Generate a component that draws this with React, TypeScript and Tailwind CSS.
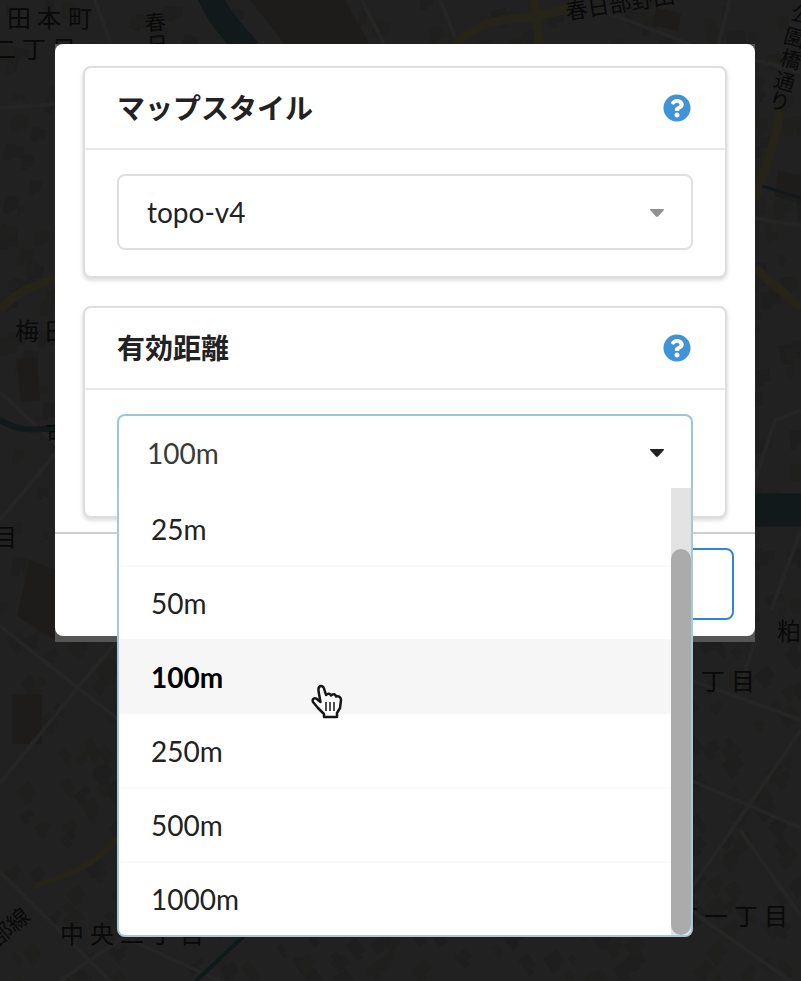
import { useState, type ReactNode } from 'react';
import { FaQuestionCircle } from 'react-icons/fa';

type Block = { points: string; fill: string };

// Building footprints for the street map, scattered with a small seeded generator.
function makeBlocks(): Block[] {
  let seed = 17;
  const next = () => {
    seed = (seed * 16807) % 2147483647;
    return seed / 2147483647;
  };
  const blocks: Block[] = [];
  for (let i = 0; i < 1100; i++) {
    const x = Math.round(next() * 801);
    const y = Math.round(next() * 981);
    const w = 6 + Math.round(next() * 14);
    const h = 5 + Math.round(next() * 10);
    const base = y > 620 ? -42 : x > 380 ? -14 : 6;
    const a = ((base + next() * 10) * Math.PI) / 180;
    const at = (u: number, v: number) =>
      `${Math.round(x + u * Math.cos(a) - v * Math.sin(a))},${Math.round(y + u * Math.sin(a) + v * Math.cos(a))}`;
    blocks.push({
      points: [at(0, 0), at(w, 0), at(w, h), at(w / 2, h), at(w / 2, h + 4), at(0, h + 4)].join(' '),
      fill: next() < 0.6 ? '#1f1f1e' : '#1e1e1e',
    });
  }
  return blocks;
}

const blocks = makeBlocks();

function StreetMap() {
  return (
    <svg
      className="absolute inset-0 h-full w-full"
      viewBox="0 0 801 981"
      preserveAspectRatio="xMidYMin slice"
      aria-hidden="true"
    >
      <rect width="801" height="981" fill="#212121" />
      {blocks.map((b, i) => (
        <polygon key={i} points={b.points} fill={b.fill} />
      ))}
      <g fill="#1d1c1a">
        <path d="M250 0H345L372 50H290Z" />
        <path d="M656 8l25 5-3 18-25-6z" />
        <path d="M16 358h21l3 42-19 2z" />
        <path d="M30 560l25 10v70l-38-24z" />
        <path d="M12 694h30v50H12z" />
        <path d="M778 170l23 6v28l-26-8z" />
      </g>
      <g fill="none" stroke="#252525" strokeWidth="4">
        <path d="M0 626l78 62 70 54M160 590l-80 95-80 98M0 872l110 109M220 870L60 981" />
        <path d="M0 392l60 56M60 448L0 520M0 108l55-4M95 0l16 44" />
        <path d="M362 0l22 44M440 0l18 44M600 10l90 34M730 0l-12 44M755 60l46 12" />
        <path d="M755 218l46 8M755 480l20-60 26-10M801 530l-30 80" />
        <path d="M690 680l111 40M690 780l111 48M801 730L690 890M740 830l61 86M690 910l100 71M130 940l90 41M755 640l-16 50" />
      </g>
      <g fill="none" stroke="#262418" strokeWidth="9">
        <path d="M0 310c16-18 34-24 56-32" />
        <path d="M455 44c20-18 40-26 72-26l44-10M534 0l6 44" />
        <path d="M780 110c-4 30-12 52-25 90M755 268l46 40" />
        <path d="M118 838c-24 28-50 38-84 48" strokeWidth="6" />
      </g>
      <g fill="none" stroke="#11191b">
        <path d="M207-10c10 26 24 40 42 60" strokeWidth="24" />
        <path d="M0 420c18 12 34 10 60 8" strokeWidth="6" />
        <path d="M750 510h56" strokeWidth="33" />
        <path d="M244 936l-48 45" strokeWidth="4" />
        <path d="M762 186l39 12" strokeWidth="3" />
      </g>
      <g
        fill="#090909"
        fontSize="24"
        style={{ fontFamily: '"Noto Sans CJK JP", sans-serif' }}
      >
        <text x="7 37 68" y="27">田本町</text>
        <text x="-8 22 52" y="58">二丁目</text>
        <text x="145" y="30" fontSize="21" transform="rotate(-5 155 25)">春</text>
        <text x="147" y="52" fontSize="21" transform="rotate(-5 155 45)">日</text>
        <text x="567" y="20" fontSize="22" transform="rotate(-9 567 20)">春日部野田</text>
        <g fontSize="21">
          <text x="791" y="22" transform="rotate(15 801 15)">公</text>
          <text x="784" y="45" transform="rotate(15 794 38)">園</text>
          <text x="780" y="67" transform="rotate(15 790 60)">橋</text>
          <text x="774" y="89" transform="rotate(15 784 82)">通</text>
          <text x="769" y="109" transform="rotate(15 779 102)">り</text>
        </g>
        <text x="15 45" y="340">梅田</text>
        <text x="46" y="439" fontSize="20">古</text>
        <text x="-7" y="546">目</text>
        <text x="777" y="640">粕</text>
        <text x="701 731" y="690">丁目</text>
        <text x="674 704 734 764" y="925">有一丁目</text>
        <text x="60 90 120 150 180" y="943">中央二丁目</text>
        <text x="-6" y="944" fontSize="22" transform="rotate(-40 0 940)">部線</text>
      </g>
    </svg>
  );
}

function HandCursor() {
  return (
    <svg
      className="pointer-events-none absolute top-[270px] left-[194px] z-20 h-9 w-8"
      viewBox="0 0 32 36"
      aria-hidden="true"
    >
      <path
        d="M7.500 4.500C8 1 12 1 13 4.500L15 11C17 9 19 9.500 20 11.500C22 9.500 24.500 10 25 12.500C27.500 11.500 30 13 30 16L29 24L26 29V33H13V30L7 24L2 18C0.500 14.500 4 13 7 16L9.500 18L7.500 7Z"
        fill="#fff"
        stroke="#151515"
        strokeWidth="2.500"
        strokeLinejoin="round"
      />
      <path d="M15 18v9M19 18v9M23 18v9" stroke="#151515" strokeWidth="1.500" fill="none" />
    </svg>
  );
}

function Caret({ className }: { className: string }) {
  return (
    <svg
      className={`pointer-events-none absolute top-[35px] right-7 h-2 w-4 ${className}`}
      viewBox="0 0 16 8"
      aria-hidden="true"
    >
      <path d="M1.500 0H14.500Q15.500 0.500 14.500 1.500L9 7.500Q8 8.300 7 7.500L1.500 1.500Q0.500 0.500 1.500 0Z" fill="currentColor" />
    </svg>
  );
}

function Card({ title, htmlFor, children }: { title: string; htmlFor: string; children: ReactNode }) {
  return (
    <section className="rounded-lg border-2 border-[#dededf] bg-white shadow-[0_2px_4px_#d4d4d5]">
      <header className="flex h-[82px] items-center justify-between border-b-2 border-[#e9e9e9] pr-[34px] pl-8">
        <label
          htmlFor={htmlFor}
          className="font-['Lato','Noto_Sans_CJK_JP',sans-serif] text-[28px] leading-9 font-bold"
        >
          {title}
        </label>
        <button type="button" aria-label="ヘルプ" className="text-[#4193d8]">
          <FaQuestionCircle size={28} />
        </button>
      </header>
      <div className="px-8 pt-6 pb-[26px]">{children}</div>
    </section>
  );
}

const distances = ['25m', '50m', '100m', '250m', '500m', '1000m'];

export default function App() {
  const [style, setStyle] = useState('topo-v4');
  const [distance, setDistance] = useState('100m');

  return (
    <div className="relative min-h-screen overflow-hidden bg-[#212121] pt-11 pr-[46px] pl-[55px] font-['Lato','Noto_Sans_CJK_JP',sans-serif] text-[28px] leading-9 text-[#222222]">
      <StreetMap />
      <div className="relative bg-[#555555] pb-1.5">
        <main role="dialog" aria-label="設定" className="rounded-lg bg-white">
          <div className="flex flex-col gap-7 px-7 pt-[22px] pb-3.5">
            <Card title="マップスタイル" htmlFor="map-style">
              <div className="relative">
                <select
                  id="map-style"
                  value={style}
                  onChange={(e) => setStyle(e.target.value)}
                  className="h-[76px] w-full appearance-none rounded-lg border-2 border-[#dedfdf] bg-white px-7 outline-none"
                >
                  <option>topo-v4</option>
                </select>
                <Caret className="text-[#919191]" />
              </div>
            </Card>
            <Card title="有効距離" htmlFor="distance">
              <div className="relative">
                <select
                  id="distance"
                  value={distance}
                  onChange={(e) => setDistance(e.target.value)}
                  className="h-[76px] w-full appearance-none rounded-t-lg border-2 border-b-0 border-[#96c8da] bg-white px-7 text-[#3a3a3a] outline-none"
                >
                  {distances.map((d) => (
                    <option key={d}>{d}</option>
                  ))}
                </select>
                <Caret className="text-[#222222]" />
                <div className="absolute inset-x-0 top-[74px] z-10 flex overflow-hidden rounded-b-lg border-2 border-t-0 border-[#a5c9d6] bg-white">
                  <ul role="listbox" aria-label="有効距離" className="flex-1 pt-[3px]">
                    {distances.map((d) => (
                      <li
                        key={d}
                        role="option"
                        aria-selected={d === distance}
                        onClick={() => setDistance(d)}
                        className={`flex h-[74px] cursor-pointer items-center border-t-2 px-8 first:border-transparent ${
                          d === distance
                            ? 'border-[#f6f6f6] bg-[#f6f6f6] font-bold text-black'
                            : 'border-[#fafafa]'
                        }`}
                      >
                        {d}
                      </li>
                    ))}
                  </ul>
                  <div className="w-5 bg-[#e3e3e3] pt-[61px]">
                    <div className="h-full rounded-full bg-[#ababab]" />
                  </div>
                </div>
                <HandCursor />
              </div>
            </Card>
          </div>
          <footer className="flex justify-end border-t-2 border-[#cfcfcf] px-[21px] pt-3.5 pb-4">
            <button
              type="button"
              aria-label="閉じる"
              className="h-[72px] w-48 rounded-lg border-2 border-[#2e87cf] bg-white"
            />
          </footer>
        </main>
      </div>
    </div>
  );
}
